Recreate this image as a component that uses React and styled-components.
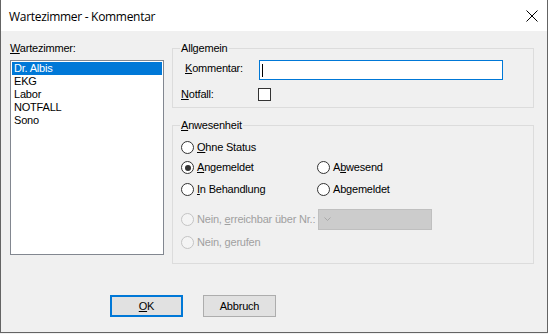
import React from "react"
import styled, { createGlobalStyle } from "styled-components"

const GlobalStyle = createGlobalStyle`
  body {
    margin: 0;
    background: #f0f0f0;
  }
`

const rooms = ["Dr. Albis", "EKG", "Labor", "NOTFALL", "Sono"]

export default function App() {
  return (
    <>
      <GlobalStyle />
      <Window>
        <TitleBar>
          <Title>Wartezimmer - Kommentar</Title>
          <CloseIcon width="12" height="12" viewBox="0 0 12 12">
            <path d="M0.5 0.5 L11.5 11.5 M11.5 0.5 L0.5 11.5" stroke="#000" strokeWidth="1" />
          </CloseIcon>
        </TitleBar>

        <Main>
          <LeftCol>
            <ListLabel>
              <u>W</u>artezimmer:
            </ListLabel>
            <ListBox>
              {rooms.map((r, i) => (
                <ListItem key={r} $selected={i === 0}>
                  {r}
                </ListItem>
              ))}
            </ListBox>
          </LeftCol>

          <RightCol>
            <Group>
              <Legend>Allgemein</Legend>
              <FormGrid>
                <Label $indent>
                  <u>K</u>ommentar:
                </Label>
                <TextField>
                  <Caret />
                </TextField>
                <Label>
                  <u>N</u>otfall:
                </Label>
                <CheckBox />
              </FormGrid>
            </Group>

            <Group $pb={17}>
              <Legend>
                <u>A</u>nwesenheit
              </Legend>
              <RadioRow $h={21}>
                <Option>
                  <Radio />
                  <span><u>O</u>hne Status</span>
                </Option>
              </RadioRow>
              <RadioRow $h={19}>
                <Option>
                  <Radio $checked />
                  <span><u>A</u>ngemeldet</span>
                </Option>
                <Option>
                  <Radio />
                  <span>A<u>b</u>wesend</span>
                </Option>
              </RadioRow>
              <RadioRow $h={25}>
                <Option>
                  <Radio />
                  <span><u>I</u>n Behandlung</span>
                </Option>
                <Option>
                  <Radio />
                  <span>Ab<u>g</u>emeldet</span>
                </Option>
              </RadioRow>
              <RadioRow $h={34}>
                <Option $disabled $span>
                  <Radio $disabled />
                  <span>Nein, <u>e</u>rreichbar über Nr.:</span>
                  <Combo>
                    <svg width="7" height="4" viewBox="0 0 7 4">
                      <path d="M0.5 0.5 L3.5 3.5 L6.5 0.5" fill="none" stroke="#a8a8a8" strokeWidth="1" />
                    </svg>
                  </Combo>
                </Option>
              </RadioRow>
              <RadioRow $h={10}>
                <Option $disabled>
                  <Radio $disabled />
                  <span>Nein, <u>g</u>erufen</span>
                </Option>
              </RadioRow>
            </Group>
          </RightCol>
        </Main>

        <Footer>
          <Button $default>
            <u>O</u>K
          </Button>
          <Button>Abbruch</Button>
        </Footer>
      </Window>
    </>
  )
}

const Window = styled.div`
  width: 548px;
  height: 333px;
  box-sizing: border-box;
  border: 1px solid #646464;
  border-top: none;
  background: #f0f0f0;
  display: flex;
  flex-direction: column;
  font-family: "Liberation Sans", Arial, sans-serif;
  font-size: 11px;
  line-height: 13px;
  letter-spacing: -0.2px;
  color: #000;

  u {
    text-decoration: underline;
    text-underline-offset: 1px;
  }
`

const TitleBar = styled.div`
  height: 31px;
  background: #fff;
  display: flex;
  align-items: center;
  justify-content: space-between;
  padding: 0 9px 0 8px;
`

const Title = styled.div`
  font-family: "Open Sans", "Noto Sans", sans-serif;
  font-size: 12px;
  letter-spacing: -0.3px;
  margin-top: 1px;
`

const CloseIcon = styled.svg`
  display: block;
  margin-top: 1px;
`

const Main = styled.div`
  display: flex;
  gap: 8px;
  padding: 11px 13px 0 9px;
`

const LeftCol = styled.div`
  width: 154px;
  display: flex;
  flex-direction: column;
  gap: 5px;
`

const ListLabel = styled.div`
  white-space: nowrap;
`

const Label = styled.div`
  padding-left: ${(p) => (p.$indent ? "4px" : "0")};
  align-self: ${(p) => (p.$indent ? "start" : "center")};
  margin-top: ${(p) => (p.$indent ? "2px" : "0")};
  white-space: nowrap;
`

const ListBox = styled.div`
  height: 195px;
  box-sizing: border-box;
  border: 1px solid #828790;
  background: #fff;
  padding: 1px;
`

const ListItem = styled.div`
  height: 13px;
  padding-left: 2px;
  background: ${(p) => (p.$selected ? "#0078d7" : "transparent")};
  color: ${(p) => (p.$selected ? "#fff" : "#000")};
`

const RightCol = styled.div`
  width: 362px;
  display: flex;
  flex-direction: column;
  gap: 11px;
`

const Group = styled.fieldset`
  margin: 0;
  min-width: 0;
  border: 1px solid #dcdcdc;
  padding: 5px 8px ${(p) => p.$pb ?? 6}px 8px;
`

const Legend = styled.legend`
  padding: 0 1px;
  margin-left: -1px;
`

const FormGrid = styled.div`
  display: grid;
  grid-template-columns: 77px 245px;
  row-gap: 8px;
  align-items: center;
`

const TextField = styled.div`
  height: 20px;
  width: 244px;
  margin-left: 1px;
  box-sizing: border-box;
  border: 1px solid #0078d7;
  background: #fff;
  display: flex;
  align-items: center;
  padding-left: 2px;
`

const Caret = styled.span`
  width: 1px;
  height: 13px;
  background: #000;
`

const CheckBox = styled.span`
  width: 13px;
  height: 13px;
  box-sizing: border-box;
  border: 1px solid #333;
  background: #fff;
`

const RadioRow = styled.div`
  height: ${(p) => p.$h}px;
  display: grid;
  grid-template-columns: 136px 1fr;
  align-items: center;
`

const Option = styled.div`
  display: flex;
  align-items: center;
  gap: 3px;
  white-space: nowrap;
  color: ${(p) => (p.$disabled ? "#a0a0a0" : "#000")};
  grid-column: ${(p) => (p.$span ? "1 / -1" : "auto")};
`

const Radio = styled.span`
  position: relative;
  width: 13px;
  height: 13px;
  box-sizing: border-box;
  border-radius: 50%;
  border: 1px solid ${(p) => (p.$disabled ? "#c4c4c4" : "#333")};
  background: ${(p) => (p.$disabled ? "#f4f4f4" : "#fff")};
  flex: none;

  &::after {
    content: "";
    display: ${(p) => (p.$checked ? "block" : "none")};
    position: absolute;
    left: 2.5px;
    top: 2.5px;
    width: 6px;
    height: 6px;
    border-radius: 50%;
    background: #333;
  }
`

const Combo = styled.div`
  width: 114px;
  height: 21px;
  box-sizing: border-box;
  border: 1px solid #bfbfbf;
  background: #cccccc;
  display: flex;
  align-items: center;
  padding-left: 5px;

  svg {
    display: block;
  }
`

const Footer = styled.div`
  display: flex;
  gap: 20px;
  padding: 31px 0 0 109px;
`

const Button = styled.div`
  width: 73px;
  height: 22px;
  box-sizing: border-box;
  border: ${(p) => (p.$default ? "2px solid #0078d7" : "1px solid #adadad")};
  background: #e1e1e1;
  display: flex;
  align-items: center;
  justify-content: center;
`
